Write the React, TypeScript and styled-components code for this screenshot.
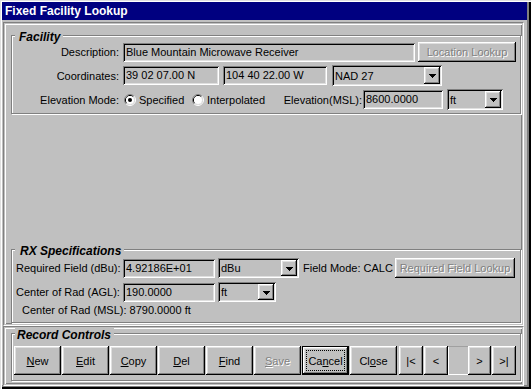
import * as React from 'react';
import styled, { createGlobalStyle, css } from 'styled-components';

type BtnSpec = { label: string; u: number; disabled?: boolean; isDefault?: boolean };

const recordButtons: BtnSpec[] = [
  { label: 'New', u: 0 },
  { label: 'Edit', u: 0 },
  { label: 'Copy', u: 0 },
  { label: 'Del', u: 0 },
  { label: 'Find', u: 0 },
  { label: 'Save', u: 0, disabled: true },
  { label: 'Cancel', u: 2, isDefault: true },
  { label: 'Close', u: 2 },
];

function Mnemonic({ label, u }: { label: string; u: number }) {
  return (
    <>
      {label.slice(0, u)}
      <u>{label[u]}</u>
      {label.slice(u + 1)}
    </>
  );
}

function Arrow() {
  return (
    <svg width="7" height="4" viewBox="0 0 7 4" shapeRendering="crispEdges">
      <rect x="0" y="0" width="7" height="1" fill="#000" />
      <rect x="1" y="1" width="5" height="1" fill="#000" />
      <rect x="2" y="2" width="3" height="1" fill="#000" />
      <rect x="3" y="3" width="1" height="1" fill="#000" />
    </svg>
  );
}

function Select({ w, h = 21, value }: { w: number; h?: number; value: string }) {
  return (
    <SelectBox $w={w} $h={h}>
      <SelectText>{value}</SelectText>
      <DropButton $h={h - 4}>
        <Arrow />
      </DropButton>
    </SelectBox>
  );
}

function Radio({ checked }: { checked?: boolean }) {
  return (
    <svg width="12" height="12" viewBox="0 0 12 12">
      <path d="M2.11 9.89A5.5 5.5 0 0 1 9.89 2.11" stroke="#808080" fill="none" />
      <path d="M9.89 2.11A5.5 5.5 0 0 1 2.11 9.89" stroke="#fff" fill="none" />
      <path d="M2.82 9.18A4.5 4.5 0 0 1 9.18 2.82" stroke="#000" fill="none" />
      <path d="M9.18 2.82A4.5 4.5 0 0 1 2.82 9.18" stroke="#dfdfdf" fill="none" />
      <circle cx="6" cy="6" r="4" fill="#fff" />
      {checked && <circle cx="6" cy="6" r="2" fill="#000" />}
    </svg>
  );
}

export default function App() {
  return (
    <>
      <GlobalStyle />
      <Window>
        <TitleBar>Fixed Facility Lookup</TitleBar>
        <Client>
          <Panel $h={304} $pt={12} $pb={2}>
            <Group $h={79} $pt={6} $gap={3}>
              <GroupTitle $pl={4}>Facility</GroupTitle>
              <Row $h={20}>
                <Label>Description:</Label>
                <Field $w={292}>Blue Mountain Microwave Receiver</Field>
                <Button $w={98} $h={20} $ml={3} $disabled>
                  Location Lookup
                </Button>
              </Row>
              <Row $h={21}>
                <Label>Coordinates:</Label>
                <Field $w={96}>39 02 07.00 N</Field>
                <Spacer $w={4} />
                <Field $w={104}>104 40 22.00 W</Field>
                <Spacer $w={5} />
                <Select w={110} value="NAD 27" />
              </Row>
              <Row $h={21}>
                <Label>Elevation Mode:</Label>
                <RadioOption $w={68} $ml={1}>
                  <Radio checked />
                  <span>Specified</span>
                </RadioOption>
                <RadioOption $w={90}>
                  <Radio />
                  <span>Interpolated</span>
                </RadioOption>
                <SubLabel $w={80}>Elevation(MSL):</SubLabel>
                <Field $w={80}>8600.0000</Field>
                <Spacer $w={4} />
                <Select w={56} value="ft" />
              </Row>
            </Group>

            <Group $h={74} $pt={8} $gap={4} $auto>
              <GroupTitle $pl={5}>RX Specifications</GroupTitle>
              <Row $h={20}>
                <Label>Required Field (dBu):</Label>
                <Field $w={92}>4.92186E+01</Field>
                <Spacer $w={3} />
                <Select w={81} h={20} value="dBu" />
                <Static $w={92} $ml={4}>Field Mode: CALC</Static>
                <Button $w={120} $h={20} $disabled>
                  Required Field Lookup
                </Button>
              </Row>
              <Row $h={20}>
                <Label>Center of Rad (AGL):</Label>
                <Field $w={92}>190.0000</Field>
                <Spacer $w={3} />
                <Select w={58} h={20} value="ft" />
              </Row>
              <Readout>Center of Rad (MSL): 8790.0000 ft</Readout>
            </Group>
          </Panel>

          <Panel $h={60} $pt={6} $pb={4}>
            <Group $h={48} $pt={12} $pl={2}>
              <GroupTitle $pl={2}>Record Controls</GroupTitle>
              <ButtonRow>
                {recordButtons.map((b) => (
                  <Button
                    key={b.label}
                    $w={47}
                    $h={29}
                    $disabled={b.disabled}
                    $default={b.isDefault}
                  >
                    {b.isDefault ? (
                      <FocusRing>
                        <Mnemonic label={b.label} u={b.u} />
                      </FocusRing>
                    ) : (
                      <Mnemonic label={b.label} u={b.u} />
                    )}
                  </Button>
                ))}
                <Button $w={24} $h={29} $ml={1}>|&lt;</Button>
                <Button $w={24} $h={29}>&lt;</Button>
                <NavField />
                <Button $w={23} $h={29}>&gt;</Button>
                <Button $w={24} $h={29}>&gt;|</Button>
              </ButtonRow>
            </Group>
          </Panel>
        </Client>
      </Window>
    </>
  );
}

const GlobalStyle = createGlobalStyle`
  html, body {
    margin: 0;
    padding: 0;
    background: #c0c0c0;
  }
  body {
    font-family: 'Liberation Sans', Arial, sans-serif;
    font-size: 11px;
    color: #000;
  }
  * {
    box-sizing: border-box;
  }
`;

const raised = css`
  box-shadow: inset -1px -1px #000, inset 1px 1px #fff, inset -2px -2px #808080,
    inset 2px 2px #dfdfdf;
`;

const sunken = css`
  box-shadow: inset 1px 1px #808080, inset -1px -1px #fff, inset 2px 2px #000,
    inset -2px -2px #dfdfdf;
`;

const Window = styled.div`
  width: 531px;
  height: 389px;
  background: #c0c0c0;
  padding: 2px 4px 3px 2px;
  display: flex;
  flex-direction: column;
  box-shadow: inset 1px 1px #dfdfdf, inset 2px 2px #fff, inset -2px -2px #000,
    inset -4px -4px #808080;
`;

const TitleBar = styled.div`
  height: 18px;
  flex: none;
  background: #000080;
  color: #fff;
  font-weight: bold;
  font-size: 12px;
  padding-left: 3px;
  display: flex;
  align-items: center;
  white-space: nowrap;
`;

const Client = styled.div`
  flex: 1;
  display: flex;
  flex-direction: column;
  padding: 2px 3px 0 1px;
`;

const Panel = styled.div<{ $h: number; $pt: number; $pb: number }>`
  height: ${(p) => p.$h}px;
  flex: none;
  display: flex;
  flex-direction: column;
  padding: ${(p) => p.$pt}px 2px ${(p) => p.$pb}px 7px;
  border: 1px solid;
  border-color: #808080 #fff #fff #808080;
  box-shadow: inset 1px 1px #c0c0c0, inset -1px -1px #c0c0c0, inset 2px 2px #fff,
    inset -2px -2px #808080;
`;

const Group = styled.div<{
  $h: number;
  $pt: number;
  $gap?: number;
  $pl?: number;
  $auto?: boolean;
}>`
  position: relative;
  height: ${(p) => p.$h}px;
  flex: none;
  display: flex;
  flex-direction: column;
  gap: ${(p) => p.$gap ?? 0}px;
  padding: ${(p) => p.$pt}px 0 0 ${(p) => p.$pl ?? 4}px;
  margin-top: ${(p) => (p.$auto ? 'auto' : '0')};
  border: 1px solid #808080;
  box-shadow: inset 1px 1px #fff, 1px 1px #fff;
`;

const GroupTitle = styled.span<{ $pl: number }>`
  position: absolute;
  top: -6px;
  left: 3px;
  padding: 0 3px 0 ${(p) => p.$pl}px;
  background: #c0c0c0;
  font-size: 12px;
  line-height: 14px;
  font-weight: bold;
  font-style: italic;
  white-space: nowrap;
`;

const Row = styled.div<{ $h: number }>`
  height: ${(p) => p.$h}px;
  display: flex;
  align-items: center;
`;

const Label = styled.span`
  width: 103px;
  flex: none;
  margin-right: 4px;
  text-align: right;
  white-space: nowrap;
`;

const SubLabel = styled.span<{ $w: number }>`
  width: ${(p) => p.$w}px;
  flex: none;
  margin-right: 1px;
  text-align: right;
  white-space: nowrap;
`;

const Static = styled.span<{ $w: number; $ml?: number }>`
  width: ${(p) => p.$w}px;
  margin-left: ${(p) => p.$ml ?? 0}px;
  flex: none;
  white-space: nowrap;
`;

const Readout = styled.div`
  margin-top: -2px;
  padding-left: 6px;
  line-height: 13px;
  white-space: nowrap;
`;

const Spacer = styled.span<{ $w: number }>`
  width: ${(p) => p.$w}px;
  flex: none;
`;

const Field = styled.div<{ $w: number }>`
  width: ${(p) => p.$w}px;
  height: 19px;
  flex: none;
  line-height: 19px;
  padding-left: 3px;
  background: #c0c0c0;
  white-space: nowrap;
  overflow: hidden;
  ${sunken}
`;

const SelectBox = styled.div<{ $w: number; $h: number }>`
  width: ${(p) => p.$w}px;
  height: ${(p) => p.$h}px;
  flex: none;
  display: flex;
  align-items: center;
  padding: 2px;
  background: #c0c0c0;
  ${sunken}
`;

const SelectText = styled.span`
  flex: 1;
  padding-left: 1px;
  white-space: nowrap;
  overflow: hidden;
`;

const DropButton = styled.span<{ $h: number }>`
  width: 16px;
  height: ${(p) => p.$h}px;
  flex: none;
  display: flex;
  align-items: center;
  justify-content: center;
  padding-top: 1px;
  background: #c0c0c0;
  ${raised}
`;

const RadioOption = styled.span<{ $w: number; $ml?: number }>`
  width: ${(p) => p.$w}px;
  margin-left: ${(p) => p.$ml ?? 0}px;
  flex: none;
  display: flex;
  align-items: center;
  gap: 3px;
  white-space: nowrap;
`;

const Button = styled.button<{
  $w: number;
  $h: number;
  $ml?: number;
  $disabled?: boolean;
  $default?: boolean;
}>`
  width: ${(p) => p.$w}px;
  height: ${(p) => p.$h}px;
  margin: 0 0 0 ${(p) => p.$ml ?? 0}px;
  flex: none;
  display: flex;
  align-items: center;
  justify-content: center;
  padding: 0;
  border: none;
  background: #c0c0c0;
  font: inherit;
  white-space: nowrap;
  color: ${(p) => (p.$disabled ? '#808080' : '#000')};
  text-shadow: ${(p) => (p.$disabled ? '1px 1px 0 #fff' : 'none')};
  ${raised}
  ${(p) =>
    p.$default &&
    css`
      border: 1px solid #000;
      padding: 3px;
    `}
`;

const FocusRing = styled.span`
  flex: 1;
  align-self: stretch;
  display: flex;
  align-items: center;
  justify-content: center;
  border: 1px dotted #000;
`;

const ButtonRow = styled.div`
  display: flex;
  gap: 1px;
`;

const NavField = styled.span`
  width: 20px;
  height: 29px;
  flex: none;
  margin: 0 -1px;
  background: #c0c0c0;
  box-shadow: inset 0 1px #a0a0a0, inset 1px 0 #fff, inset 0 -1px #fff;
`;
